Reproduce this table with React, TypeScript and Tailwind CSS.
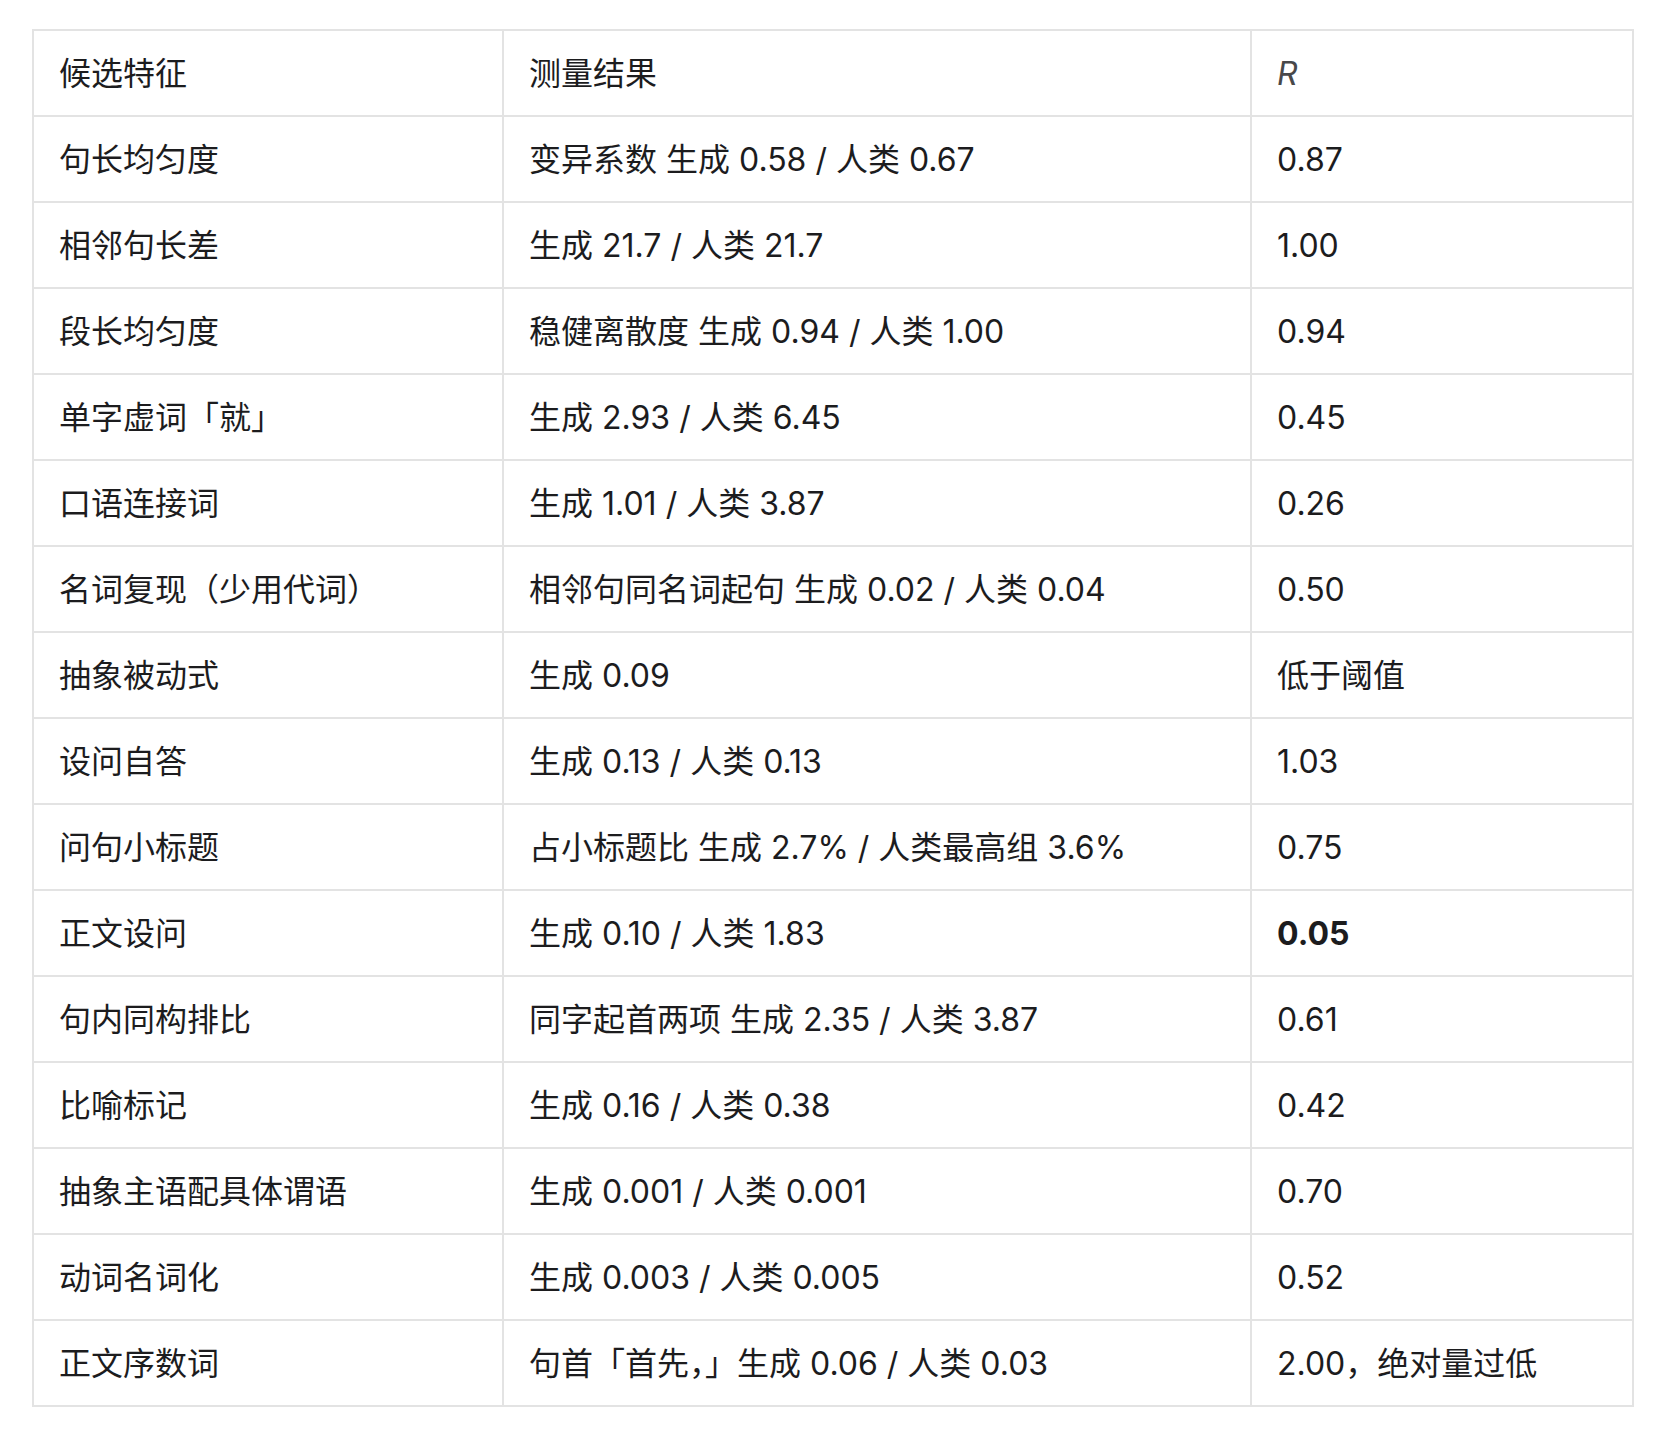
const rows: [string, string, string, boolean?][] = [
  ['句长均匀度', '变异系数 生成 0.58 / 人类 0.67', '0.87'],
  ['相邻句长差', '生成 21.7 / 人类 21.7', '1.00'],
  ['段长均匀度', '稳健离散度 生成 0.94 / 人类 1.00', '0.94'],
  ['单字虚词「就」', '生成 2.93 / 人类 6.45', '0.45'],
  ['口语连接词', '生成 1.01 / 人类 3.87', '0.26'],
  ['名词复现（少用代词）', '相邻句同名词起句 生成 0.02 / 人类 0.04', '0.50'],
  ['抽象被动式', '生成 0.09', '低于阈值'],
  ['设问自答', '生成 0.13 / 人类 0.13', '1.03'],
  ['问句小标题', '占小标题比 生成 2.7% / 人类最高组 3.6%', '0.75'],
  ['正文设问', '生成 0.10 / 人类 1.83', '0.05', true],
  ['句内同构排比', '同字起首两项 生成 2.35 / 人类 3.87', '0.61'],
  ['比喻标记', '生成 0.16 / 人类 0.38', '0.42'],
  ['抽象主语配具体谓语', '生成 0.001 / 人类 0.001', '0.70'],
  ['动词名词化', '生成 0.003 / 人类 0.005', '0.52'],
  ['正文序数词', '句首「首先，」生成 0.06 / 人类 0.03', '2.00，绝对量过低'],
]

const cell = 'h-[86px] pl-[25px] pr-[20px] py-0 border-2 border-[#e3e3e3] align-middle'

export default function App() {
  return (
    <div
      className="min-h-screen bg-white pt-[29px] pl-[32px] text-[#1c1c1e] text-[32px] leading-[45px]"
      style={{ fontFamily: 'Inter, "Noto Sans CJK SC", sans-serif' }}
    >
      <table className="border-collapse table-fixed w-[1600px]">
        <colgroup>
          <col className="w-[470px]" />
          <col className="w-[748px]" />
          <col className="w-[382px]" />
        </colgroup>
        <thead>
          <tr>
            <th className={`${cell} text-left font-normal`}>候选特征</th>
            <th className={`${cell} text-left font-normal`}>测量结果</th>
            <th className={`${cell} text-left font-normal italic text-[#48484a]`}>R</th>
          </tr>
        </thead>
        <tbody>
          {rows.map(([name, result, r, bold]) => (
            <tr key={name}>
              <td className={cell}>{name}</td>
              <td className={cell}>{result}</td>
              <td className={`${cell} ${bold ? 'font-bold' : ''}`}>{r}</td>
            </tr>
          ))}
        </tbody>
      </table>
    </div>
  )
}
